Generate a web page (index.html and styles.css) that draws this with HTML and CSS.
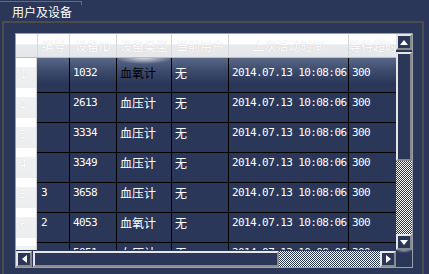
FILE: index.html
```html
<!DOCTYPE html>
<html lang="zh">
<head>
  <meta charset="UTF-8">
  <title>用户及设备</title>
  <link rel="stylesheet" href="styles.css">
</head>
<body>
  <div class="tab">用户及设备</div>
  <div class="group">
    <div class="grid">
      <div class="view">
        <div class="hrow">
          <div class="hc first"></div>
          <div class="hc">编号</div>
          <div class="hc">设备ID</div>
          <div class="hc">设备类型</div>
          <div class="hc">当前用户</div>
          <div class="hc">上次活动时间</div>
          <div class="hc">等待超时</div>
        </div>
        <div class="row sel">
          <div class="rh">1</div>
          <div class="c n"></div>
          <div class="c n">1032</div>
          <div class="c cur">血氧计</div>
          <div class="c">无</div>
          <div class="c n">2014.07.13 10:08:06</div>
          <div class="c n">300</div>
        </div>
        <div class="row">
          <div class="rh">2</div>
          <div class="c n"></div>
          <div class="c n">2613</div>
          <div class="c">血压计</div>
          <div class="c">无</div>
          <div class="c n">2014.07.13 10:08:06</div>
          <div class="c n">300</div>
        </div>
        <div class="row">
          <div class="rh">3</div>
          <div class="c n"></div>
          <div class="c n">3334</div>
          <div class="c">血压计</div>
          <div class="c">无</div>
          <div class="c n">2014.07.13 10:08:06</div>
          <div class="c n">300</div>
        </div>
        <div class="row">
          <div class="rh">4</div>
          <div class="c n"></div>
          <div class="c n">3349</div>
          <div class="c">血压计</div>
          <div class="c">无</div>
          <div class="c n">2014.07.13 10:08:06</div>
          <div class="c n">300</div>
        </div>
        <div class="row">
          <div class="rh">5</div>
          <div class="c n">3</div>
          <div class="c n">3658</div>
          <div class="c">血压计</div>
          <div class="c">无</div>
          <div class="c n">2014.07.13 10:08:06</div>
          <div class="c n">300</div>
        </div>
        <div class="row">
          <div class="rh">6</div>
          <div class="c n">2</div>
          <div class="c n">4053</div>
          <div class="c">血氧计</div>
          <div class="c">无</div>
          <div class="c n">2014.07.13 10:08:06</div>
          <div class="c n">300</div>
        </div>
        <div class="row">
          <div class="rh"></div>
          <div class="c n"></div>
          <div class="c n">5051</div>
          <div class="c">血压计</div>
          <div class="c">无</div>
          <div class="c n">2014.07.13 10:08:06</div>
          <div class="c n">300</div>
        </div>
      </div>

      <div class="vscroll">
        <div class="btn"><svg width="8" height="5" viewBox="0 0 8 5"><polygon points="0,5 8,5 4,0" fill="#fff"/></svg></div>
        <div class="vthumb"></div>
        <div class="track"></div>
        <div class="btn"><svg width="8" height="5" viewBox="0 0 8 5"><polygon points="0,0 8,0 4,5" fill="#fff"/></svg></div>
      </div>

      <div class="hscroll">
        <div class="btn"><svg width="5" height="8" viewBox="0 0 5 8"><polygon points="5,0 5,8 0,4" fill="#fff"/></svg></div>
        <div class="hthumb"></div>
        <div class="track"></div>
        <div class="btn"><svg width="5" height="8" viewBox="0 0 5 8"><polygon points="0,0 0,8 5,4" fill="#fff"/></svg></div>
      </div>

      <div class="sizer"></div>
    </div>
  </div>
</body>
</html>
```

FILE: styles.css
```css
body {
  margin: 0;
  width: 429px;
  height: 274px;
  overflow: hidden;
  background: #2a3759;
  font-family: "Noto Sans CJK SC", "DejaVu Sans", sans-serif;
  font-size: 12px;
  color: #fff;
}
.tab {
  width: 70px;
  height: 19px;
  margin-top: 1px;
  padding-left: 12px;
  line-height: 19px;
  font-size: 12px;
  border-top: 1px solid #6b6b6b;
  background: linear-gradient(#6b6b6b, #6b6b6b) right top / 1px 3px no-repeat;
}
.group {
  height: 250px;
  margin: 0 5px 0 2px;
  padding: 10px 9px 0 11px;
  border: 2px solid #4c4c4c;
  border-bottom: none;
}
.grid {
  display: grid;
  grid-template-columns: 380px 16px;
  grid-template-rows: 216px 17px;
  border: 1px solid #9aa0ab;
  width: 396px;
}
.view {
  overflow: hidden;
}
.hrow, .row {
  display: grid;
  grid-template-columns: 21px 32px 47px 55px 57px 120px 48px;
}
.hrow {
  height: 24px;
  background-color: #ebecee;
  background-image: linear-gradient(#ffffff 0, #ffffff 45%, #eaebed 46%, #e6e7ea 100%);
  border-bottom: 1px solid #b8bcc4;
  box-sizing: border-box;
}
.hc {
  border-left: 1px solid #d6d8dc;
  text-align: center;
  line-height: 23px;
  color: #fff;
  text-shadow: 0 0 1px rgba(0, 0, 0, 0.18);
  white-space: nowrap;
  overflow: hidden;
}
.hc.first {
  border-left: none;
}
.row {
  height: 30px;
}
.row .rh {
  background-color: #eeeff1;
  background-image: linear-gradient(#ffffff 0, #ffffff 27%, #f0f1f2 28%, #ebecee 100%);
  border-bottom: 1px solid #dfe0e3;
  border-right: 1px solid #d2d4d8;
  padding-left: 4px;
  line-height: 34px;
  font-family: "DejaVu Sans Mono", monospace;
  font-size: 11px;
  color: #fff;
  text-shadow: 0 0 1px rgba(0, 0, 0, 0.2);
}
.c {
  border-left: 1px solid #000;
  border-bottom: 1px solid #000;
  padding-left: 3px;
  line-height: 29px;
  white-space: nowrap;
  overflow: hidden;
}
.c:nth-child(2) {
  border-left: none;
  padding-left: 4px;
}
.n {
  font-family: "DejaVu Sans Mono", monospace;
  font-size: 11px;
  letter-spacing: -0.6px;
}
.sel .c {
  background: linear-gradient(#5a6888 0, #3e4c6e 35%, #2a3759 75%);
}
.sel .c.cur {
  color: #000;
  background:
    radial-gradient(ellipse 28px 6px at 50% 0, rgba(255, 255, 255, 0.75), rgba(255, 255, 255, 0) 100%),
    linear-gradient(#5a6888 0, #3e4c6e 35%, #2a3759 75%);
}
.btn {
  width: 16px;
  height: 16px;
  box-sizing: border-box;
  border: 2px solid;
  border-color: #e6e6e6 #8a8a8a #8a8a8a #e6e6e6;
  background: #2a3759;
  display: flex;
  align-items: center;
  justify-content: center;
}
.track {
  flex: 1;
  background: repeating-conic-gradient(#ffffff 0 25%, #2a3759 0 50%) 0 0 / 2px 2px;
}
.vscroll {
  display: flex;
  flex-direction: column;
}
.vthumb {
  height: 109px;
  margin-top: 2px;
  box-sizing: border-box;
  border: 2px solid;
  border-color: #e6e6e6 #8a8a8a #8a8a8a #e6e6e6;
}
.hscroll {
  display: flex;
  align-items: flex-end;
}
.hthumb {
  width: 246px;
  height: 16px;
  margin-left: 1px;
  box-sizing: border-box;
  border: 2px solid;
  border-color: #e6e6e6 #8a8a8a #8a8a8a #e6e6e6;
}
.hscroll .track {
  height: 16px;
}
.sizer {
  background: radial-gradient(ellipse 9px 3px at 50% 0, rgba(220, 225, 240, 0.6), rgba(220, 225, 240, 0) 100%);
}
```
